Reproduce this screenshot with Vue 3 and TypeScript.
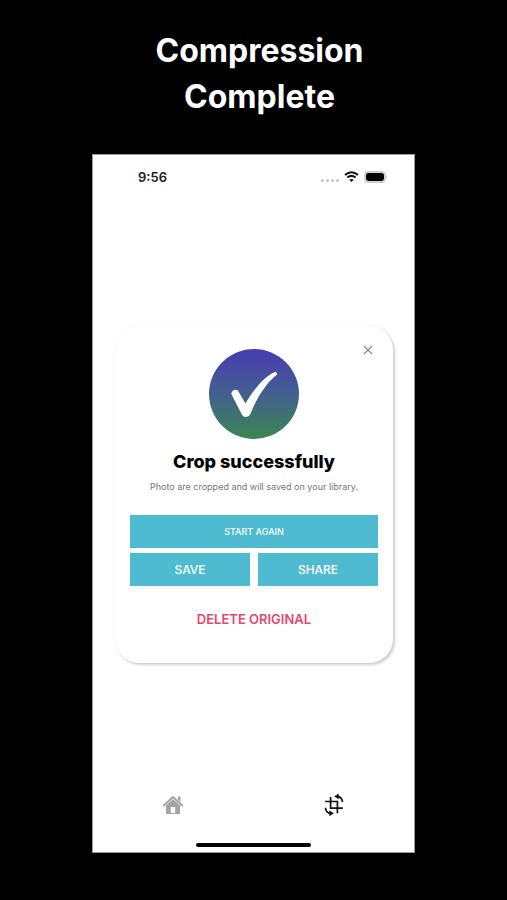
<script setup lang="ts">
import { ref } from 'vue'

type Tab = 'home' | 'crop'

const activeTab = ref<Tab>('crop')
const open = ref(true)
const signalDots = [0, 1, 2, 3]
</script>

<template>
  <div class="page">
    <h1 class="headline">Compression<br />Complete</h1>

    <section class="phone">
      <header class="status">
        <time class="clock">9:56</time>
        <div class="indicators">
          <span class="signal"><i v-for="dot in signalDots" :key="dot"></i></span>
          <svg class="wifi" viewBox="0 0 15 11" aria-hidden="true">
            <path d="M1 4 Q7.5 -1.6 14 4" />
            <path d="M3.4 6.6 Q7.5 3.1 11.6 6.6" />
            <path class="solid" d="M5.3 8.8 Q7.5 7 9.700 8.8 L7.5 11 Z" />
          </svg>
          <svg class="battery" viewBox="0 0 24 12" aria-hidden="true">
            <rect x="0.75" y="0.75" width="20.5" height="10.5" rx="3.5" fill="#ddd" stroke="#c9c9c9" stroke-width="1.3" />
            <rect x="2" y="2" width="18" height="8" rx="2.4" fill="#000" />
            <path d="M22.3 4.2 Q23.8 6 22.3 7.8 Z" fill="#aaa" />
          </svg>
        </div>
      </header>

      <main class="body">
        <article v-if="open" class="card">
          <button class="close" type="button" aria-label="Close" @click="open = false">
            <svg viewBox="0 0 10 10" aria-hidden="true"><path d="M1 1 L9 9 M9 1 L1 9" /></svg>
          </button>
          <svg class="badge" viewBox="0 0 90 90" aria-hidden="true">
            <defs>
              <linearGradient id="badge-fill" x1="0" y1="0" x2="0" y2="1">
                <stop offset="0.08" stop-color="#4740ad" />
                <stop offset="0.5" stop-color="#42608f" />
                <stop offset="1" stop-color="#3b8651" />
              </linearGradient>
            </defs>
            <circle cx="45" cy="45" r="45" fill="url(#badge-fill)" />
            <path
              d="M22.6 45.5 C21.800 43.500 23.300 41.400 26 40.700 C27.800 40.400 29 41.200 29.800 42.900 L36.400 54.600 C43.500 42.500 54.500 27.800 65.500 23.200 C67.300 22.600 68.900 24.300 67.500 26 C58 33.500 49 47 43 61 C41.600 64.800 40.700 66.800 38.800 67.500 C36.400 68.400 34.200 67.800 33 65.700 Z"
              fill="#fff"
            />
          </svg>
          <h2 class="title">Crop successfully</h2>
          <p class="note">Photo are cropped and will saved on your library.</p>
          <div class="actions">
            <button class="action wide" type="button">START AGAIN</button>
            <button class="action" type="button">SAVE</button>
            <button class="action" type="button">SHARE</button>
          </div>
          <button class="delete" type="button">DELETE ORIGINAL</button>
        </article>
      </main>

      <nav class="tabs">
        <button
          class="tab"
          :class="{ active: activeTab === 'home' }"
          type="button"
          aria-label="Home"
          @click="activeTab = 'home'"
        >
          <svg viewBox="0 0 22 22" aria-hidden="true">
            <path d="M15.800 2.500 H18.500 V8 L15.800 5.500 Z" fill="currentColor" />
            <path d="M1.800 11.500 L11 3 L20.200 11.500" fill="none" stroke="currentColor" stroke-width="2" stroke-linecap="round" stroke-linejoin="round" />
            <path d="M4 11.600 L11 5.300 L18 11.600 V20 H4 Z M8.800 13 V19 H13.200 V13 Z" fill="currentColor" fill-rule="evenodd" />
          </svg>
        </button>
        <button
          class="tab"
          :class="{ active: activeTab === 'crop' }"
          type="button"
          aria-label="Crop and rotate"
          @click="activeTab = 'crop'"
        >
          <svg viewBox="0 0 22 22" aria-hidden="true">
            <g fill="none" stroke="currentColor" stroke-width="1.700">
              <path d="M7.600 3 V14.200 H19.800 M2.200 7.500 H14.400 V19.300" />
              <path d="M19.500 8 Q19.300 2.800 14 2.300" />
              <path d="M2.500 13.700 Q2.700 18.900 8 19.400" />
            </g>
            <path d="M15.400 0 V4.800 L11.600 2.400 Z M6.600 16.900 V21.700 L10.400 19.300 Z" fill="currentColor" stroke="currentColor" stroke-width="0.600" stroke-linejoin="round" />
          </svg>
        </button>
      </nav>
      <div class="home-bar"></div>
    </section>
  </div>
</template>

<style>
body {
  background: #000;
}
</style>

<style scoped>
.page {
  box-sizing: border-box;
  min-height: 100vh;
  display: flex;
  flex-direction: column;
  padding: 28px 92px 47px;
  background: #000;
  font-family: Inter, "Liberation Sans", sans-serif;
}

button {
  margin: 0;
  padding: 0;
  border: 0;
  background: none;
  font-family: inherit;
  cursor: pointer;
}

svg {
  display: block;
}

.headline {
  margin: 0 0 34px;
  padding-left: 12px;
  color: #fff;
  font-size: 32px;
  font-weight: 700;
  line-height: 46px;
  text-align: center;
}

.phone {
  box-sizing: border-box;
  flex: 1;
  display: flex;
  flex-direction: column;
  border: 1px solid #999;
  padding-bottom: 5px;
  background: #fff;
}

.status {
  display: flex;
  align-items: center;
  justify-content: space-between;
  height: 43px;
  padding: 0 26px 0 45px;
}

.clock {
  color: #222;
  font-size: 13px;
  font-weight: 600;
}

.indicators {
  display: flex;
  align-items: center;
  gap: 5px;
}

.signal {
  display: flex;
  gap: 2px;
  padding-top: 7px;
}

.signal i {
  width: 3px;
  height: 3px;
  border-radius: 50%;
  background: #c4c4c4;
}

.wifi {
  width: 15px;
  height: 11px;
  fill: none;
  stroke: #111;
  stroke-width: 2;
}

.wifi .solid {
  fill: #111;
  stroke: none;
}

.battery {
  width: 24px;
  height: 12px;
}

.body {
  flex: 1;
  display: flex;
  flex-direction: column;
  justify-content: center;
  padding: 0 21px 0 22px;
}

.card {
  position: relative;
  display: flex;
  flex-direction: column;
  align-items: center;
  padding: 23px 15px 35px;
  border-radius: 24px;
  background: #fff;
  box-shadow: 2px 2px 3px rgba(0, 0, 0, 0.18), 0 0 2px rgba(0, 0, 0, 0.08);
}

.close {
  position: absolute;
  top: 14px;
  right: 15px;
  display: grid;
  place-items: center;
  width: 20px;
  height: 20px;
}

.close svg {
  width: 10px;
  height: 10px;
  stroke: #888;
  stroke-width: 1.2;
}

.badge {
  width: 90px;
  height: 90px;
}

.title {
  margin: 11px 0 6px;
  color: #000;
  font-size: 18px;
  font-weight: 800;
  line-height: 24px;
}

.note {
  margin: 0 0 21px;
  color: #777;
  font-size: 9px;
  line-height: 14px;
  text-align: center;
}

.actions {
  align-self: stretch;
  display: grid;
  grid-template-columns: 1fr 1fr;
  gap: 5px 8px;
  margin-bottom: 24px;
}

.action {
  height: 33px;
  background: #4ebbd1;
  color: #fff;
  font-size: 12px;
  font-weight: 500;
}

.wide {
  grid-column: 1 / -1;
  font-size: 9px;
}

.delete {
  color: #e5486f;
  font-size: 13px;
  font-weight: 600;
  line-height: 18px;
}

.tabs {
  display: grid;
  grid-template-columns: 1fr 1fr;
  height: 28px;
  margin-bottom: 24px;
}

.tab {
  display: grid;
  place-items: center;
  color: #a3a3a3;
}

.tab.active {
  color: #111;
}

.tab svg {
  width: 22px;
  height: 22px;
}

.home-bar {
  align-self: center;
  width: 36%;
  height: 4px;
  border-radius: 2px;
  background: #000;
}
</style>
